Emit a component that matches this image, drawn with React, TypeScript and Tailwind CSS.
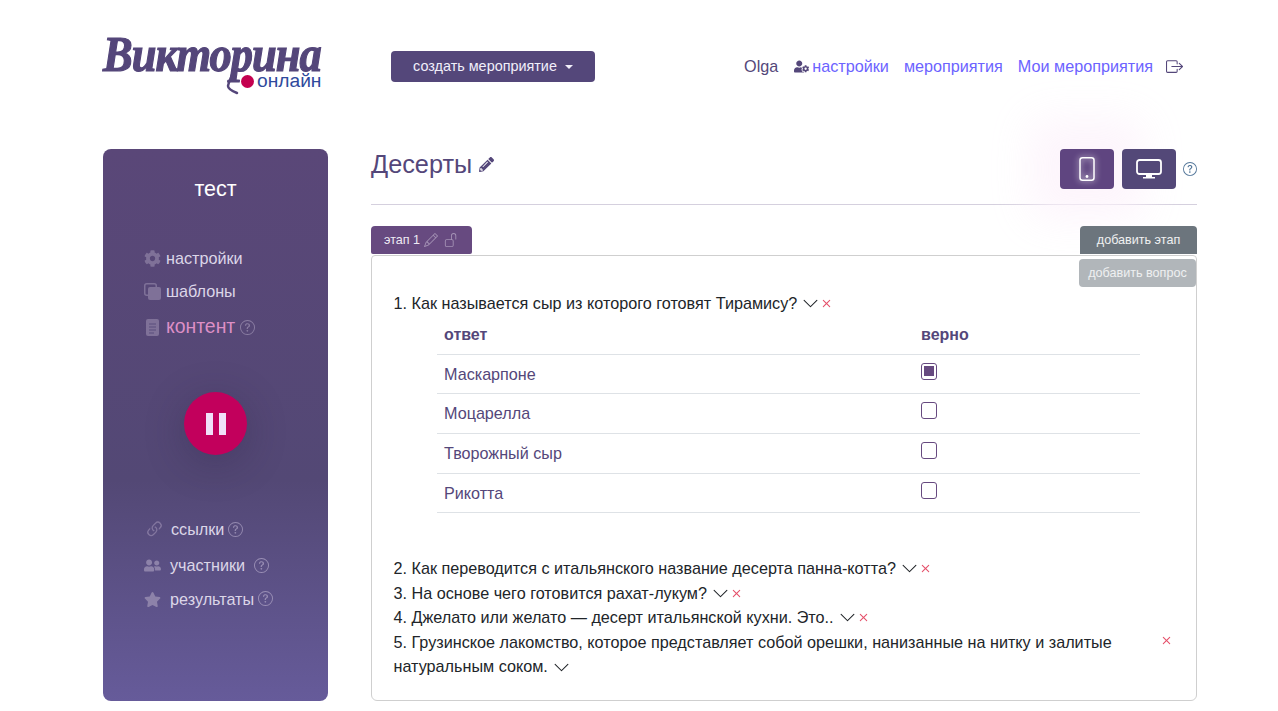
import { FaCog, FaUserFriends, FaStar, FaPencilAlt, FaUserCog } from 'react-icons/fa';
import { BsLink45Deg, BsPencil, BsUnlock, BsChevronDown, BsBoxArrowRight, BsQuestionCircle, BsX } from 'react-icons/bs';

const answers = [
  { text: 'Маскарпоне', checked: true },
  { text: 'Моцарелла', checked: false },
  { text: 'Творожный сыр', checked: false },
  { text: 'Рикотта', checked: false },
];

function Logo() {
  return (
    <div className="relative w-[222px] h-[60px]">
      <span className="absolute left-0 top-[4px] origin-[50%_85%] scale-y-[1.12] text-[44.5px] leading-[34px] font-bold italic text-[#54467a] tracking-[-1px] [font-family:'Liberation_Serif',serif] [-webkit-text-stroke:1.1px_#54467a]">
        Викторина
      </span>
      <svg className="absolute left-[120px] top-[26px]" width="30" height="36" viewBox="0 0 30 36" fill="none">
        <path d="M11 8 C9 15 6 20 5 25 C5 28 9 30 14 32" stroke="#54467a" strokeWidth="2.5" strokeLinecap="round" />
      </svg>
      <span className="absolute left-[138px] top-[40px] w-[13px] h-[13px] rounded-full bg-[#c4004f]" />
      <span className="absolute left-[154px] top-[39px] text-[19.2px] leading-[14px] text-[#2f4a9c]">онлайн</span>
    </div>
  );
}

function Help({ className }: { className: string }) {
  return <BsQuestionCircle className={className} />;
}

function Remove({ className = '' }: { className?: string }) {
  return <BsX className={`text-[#e5506a] w-[17px] h-[17px] ${className}`} />;
}

function Caret() {
  return <BsChevronDown className="w-[17px] h-[17px] ml-[5px] mr-[2px] text-[#212529]" />;
}

export default function App() {
  return (
    <div className="min-h-[711px] bg-white pl-[103px] pr-[81px] pt-[35px] text-[16.2px] [font-family:'Liberation_Sans',Arial,sans-serif]">
      <header className="flex items-start h-[114px]">
        <Logo />
        <button className="ml-[66px] mt-[16px] w-[204px] h-[31px] rounded-[4px] bg-[#54477a] text-[#f1effa] text-[14.4px] flex items-center justify-center gap-[8px]">
          создать мероприятие
          <span className="w-0 h-0 border-x-[4.5px] border-x-transparent border-t-[4.5px] border-t-[#f1effa]" />
        </button>
        <nav className="ml-auto mr-[14px] mt-[20px] h-[22px] flex items-center text-[#6c63ff]">
          <span className="text-[#54477a]">Olga</span>
          <FaUserCog className="ml-[16px] mr-[3px] w-[15px] h-[15px] text-[#54477a]" />
          <span>настройки</span>
          <span className="ml-[15px]">мероприятия</span>
          <span className="ml-[15px]">Мои мероприятия</span>
          <BsBoxArrowRight className="ml-[13px] w-[17px] h-[17px] text-[#54477a]" />
        </nav>
      </header>

      <div className="flex gap-[43px]">
        <aside className="w-[225px] h-[552px] shrink-0 rounded-[8px] bg-gradient-to-b from-[#5a4778] via-[#534875] via-60% to-[#665b9a] pt-[27px] text-[#dcd6e8]">
          <div className="text-center text-[21.5px] leading-[26px] text-white">тест</div>
          <div className="mt-[44px] pl-[41px] flex flex-col">
            <div className="flex items-center h-[24px] gap-[5px]">
              <FaCog className="w-[17px] h-[17px] text-[#7f7198]" />
              настройки
            </div>
            <div className="flex items-center h-[24px] mt-[9px] gap-[5px]">
              <svg width="17" height="17" viewBox="0 0 17 17" fill="none">
                <rect x="0.75" y="0.75" width="11.5" height="11.5" rx="2" stroke="#7f7198" strokeWidth="1.5" />
                <rect x="4" y="4" width="13" height="13" rx="2" fill="#7f7198" />
              </svg>
              шаблоны
            </div>
            <div className="flex items-center h-[26px] mt-[11px]">
              <svg className="ml-[2px] mr-[7px]" width="13" height="17" viewBox="0 0 13 17">
                <rect width="13" height="17" rx="2" fill="#7f7198" />
                <path d="M3 5H10M3 8H10M3 11H10M3 14H8" stroke="#5a4e7c" strokeWidth="1" />
              </svg>
              <span className="text-[19.4px] text-[#dd8fc6]">контент</span>
              <Help className="ml-[5px] w-[15px] h-[15px] text-[#8b7ea3]" />
            </div>
          </div>
          <div className="mt-[52px] flex justify-center">
            <div className="w-[63px] h-[63px] rounded-full bg-[#c2005c] flex items-center justify-center gap-[6px] shadow-[0_8px_40px_rgba(40,30,60,0.3)]">
              <span className="w-[7px] h-[22px] bg-[#f0e0f8]" />
              <span className="w-[7px] h-[22px] bg-[#f0e0f8]" />
            </div>
          </div>
          <div className="mt-[62px] pl-[41px] flex flex-col">
            <div className="flex items-center h-[24px]">
              <BsLink45Deg className="w-[21px] h-[21px] text-[#83769f]" />
              <span className="ml-[6px]">ссылки</span>
              <Help className="ml-[4px] w-[15px] h-[15px] text-[#958ab0]" />
            </div>
            <div className="flex items-center h-[24px] mt-[12px]">
              <FaUserFriends className="w-[17px] h-[17px] text-[#8d82a9]" />
              <span className="ml-[9px]">участники</span>
              <Help className="ml-[9px] w-[15px] h-[15px] text-[#9a8fb5]" />
            </div>
            <div className="flex items-center h-[24px] mt-[10px]">
              <FaStar className="w-[17px] h-[17px] text-[#8d82a9]" />
              <span className="ml-[9px]">результаты</span>
              <Help className="ml-[4px] -mt-[2px] w-[15px] h-[15px] text-[#9a8fb5]" />
            </div>
          </div>
        </aside>

        <main className="w-[826px]">
          <div className="flex items-start h-[56px] border-b border-[#d5d0de]">
            <h1 className="-mt-px text-[25.3px] leading-[32px] text-[#54477a]">Десерты</h1>
            <FaPencilAlt className="ml-[7px] mt-[8px] w-[15px] h-[15px] text-[#54477a]" />
            <div className="ml-auto flex items-center">
              <div className="w-[54px] h-[40px] rounded-[4px] bg-[#5f4580] flex items-center justify-center shadow-[0_0_40px_30px_rgba(253,243,251,0.85)]">
                <svg className="[filter:drop-shadow(0_0_3px_#fff)]" width="16" height="24" viewBox="0 0 16 24" fill="none">
                  <rect x="1" y="0.75" width="14" height="22.5" rx="2.5" stroke="white" strokeWidth="1.5" />
                  <circle cx="8" cy="19.5" r="1.4" fill="white" />
                </svg>
              </div>
              <div className="ml-[8px] w-[54px] h-[40px] rounded-[4px] bg-[#534878] flex items-center justify-center">
                <svg width="26" height="20" viewBox="0 0 26 20" fill="none">
                  <rect x="1" y="1" width="24" height="14" rx="2.5" stroke="white" strokeWidth="1.8" />
                  <path d="M10 15.5H16V18H19V19.5H7V18H10Z" fill="white" />
                </svg>
              </div>
              <Help className="ml-[7px] w-[14px] h-[14px] text-[#54779a]" />
            </div>
          </div>

          <div className="mt-[21px] flex justify-between h-[29px]">
            <div className="w-[101px] h-[28px] rounded-t-[4px] rounded-b-[2px] bg-[#674a80] text-[#eee9f4] text-[12.6px] flex items-center pl-[13px]">
              этап 1
              <BsPencil className="ml-[4px] w-[14px] h-[14px] text-[#a593b5]" />
              <BsUnlock className="ml-[6px] w-[14px] h-[14px] text-[#a593b5]" />
            </div>
            <div className="w-[117px] h-[28px] rounded-t-[4px] bg-[#6c757d] text-white/90 text-[12.6px] flex items-center justify-center">
              добавить этап
            </div>
          </div>

          <section className="relative h-[446px] rounded-b-[6px] rounded-t-[4px] border border-[#cfcfcf] pt-[35px] pl-[21.5px] text-[#212529]">
            <div className="absolute right-0 top-[3px] w-[117px] h-[28px] rounded-[4px] bg-[#b1b6ba] text-white/80 text-[12.6px] flex items-center justify-center">
              добавить вопрос
            </div>
            <div className="flex items-center h-[24px]">
              1. Как называется сыр из которого готовят Тирамису?
              <Caret />
              <Remove className="-ml-[3px]" />
            </div>

            <table className="ml-[43.5px] mt-[1px] w-[703px] border-collapse text-[16px] text-[#54477a]">
              <thead>
                <tr className="h-[38px] border-b border-[#dee2e6] text-left">
                  <th className="pl-[7px] font-bold w-[484px]">ответ</th>
                  <th className="font-bold">верно</th>
                </tr>
              </thead>
              <tbody>
                {answers.map((a) => (
                  <tr key={a.text} className="h-[39.7px] border-b border-[#dee2e6]">
                    <td className="pl-[7px] pt-[0.5px]">
                      <span className="text-[16.16px]">{a.text}</span>
                    </td>
                    <td>
                      <span className="flex items-center justify-center w-[16px] h-[17px] -mt-[5.5px] rounded-[3px] border border-[#674a80]">
                        {a.checked && <span className="w-[10px] h-[10px] bg-[#674a80]" />}
                      </span>
                    </td>
                  </tr>
                ))}
              </tbody>
            </table>

            <div className="mt-[43px] leading-[24.5px]">
              <div className="flex items-center">
                2. Как переводится с итальянского название десерта панна-котта?
                <Caret />
                <Remove className="-ml-[3px]" />
              </div>
              <div className="flex items-center">
                3. На основе чего готовится рахат-лукум?
                <Caret />
                <Remove className="-ml-[3px]" />
              </div>
              <div className="flex items-center">
                4. Джелато или желато — десерт итальянской кухни. Это..
                <Caret />
                <Remove className="-ml-[3px]" />
              </div>
              <div className="flex items-start">
                <div className="w-[767px]">
                  5. Грузинское лакомство, которое представляет собой орешки, нанизанные на нитку и залитые натуральным соком.
                  <BsChevronDown className="inline w-[17px] h-[17px] ml-[5px] text-[#212529]" />
                </div>
                <Remove className="ml-[-3px] mt-[2px]" />
              </div>
            </div>
          </section>
        </main>
      </div>
    </div>
  );
}
